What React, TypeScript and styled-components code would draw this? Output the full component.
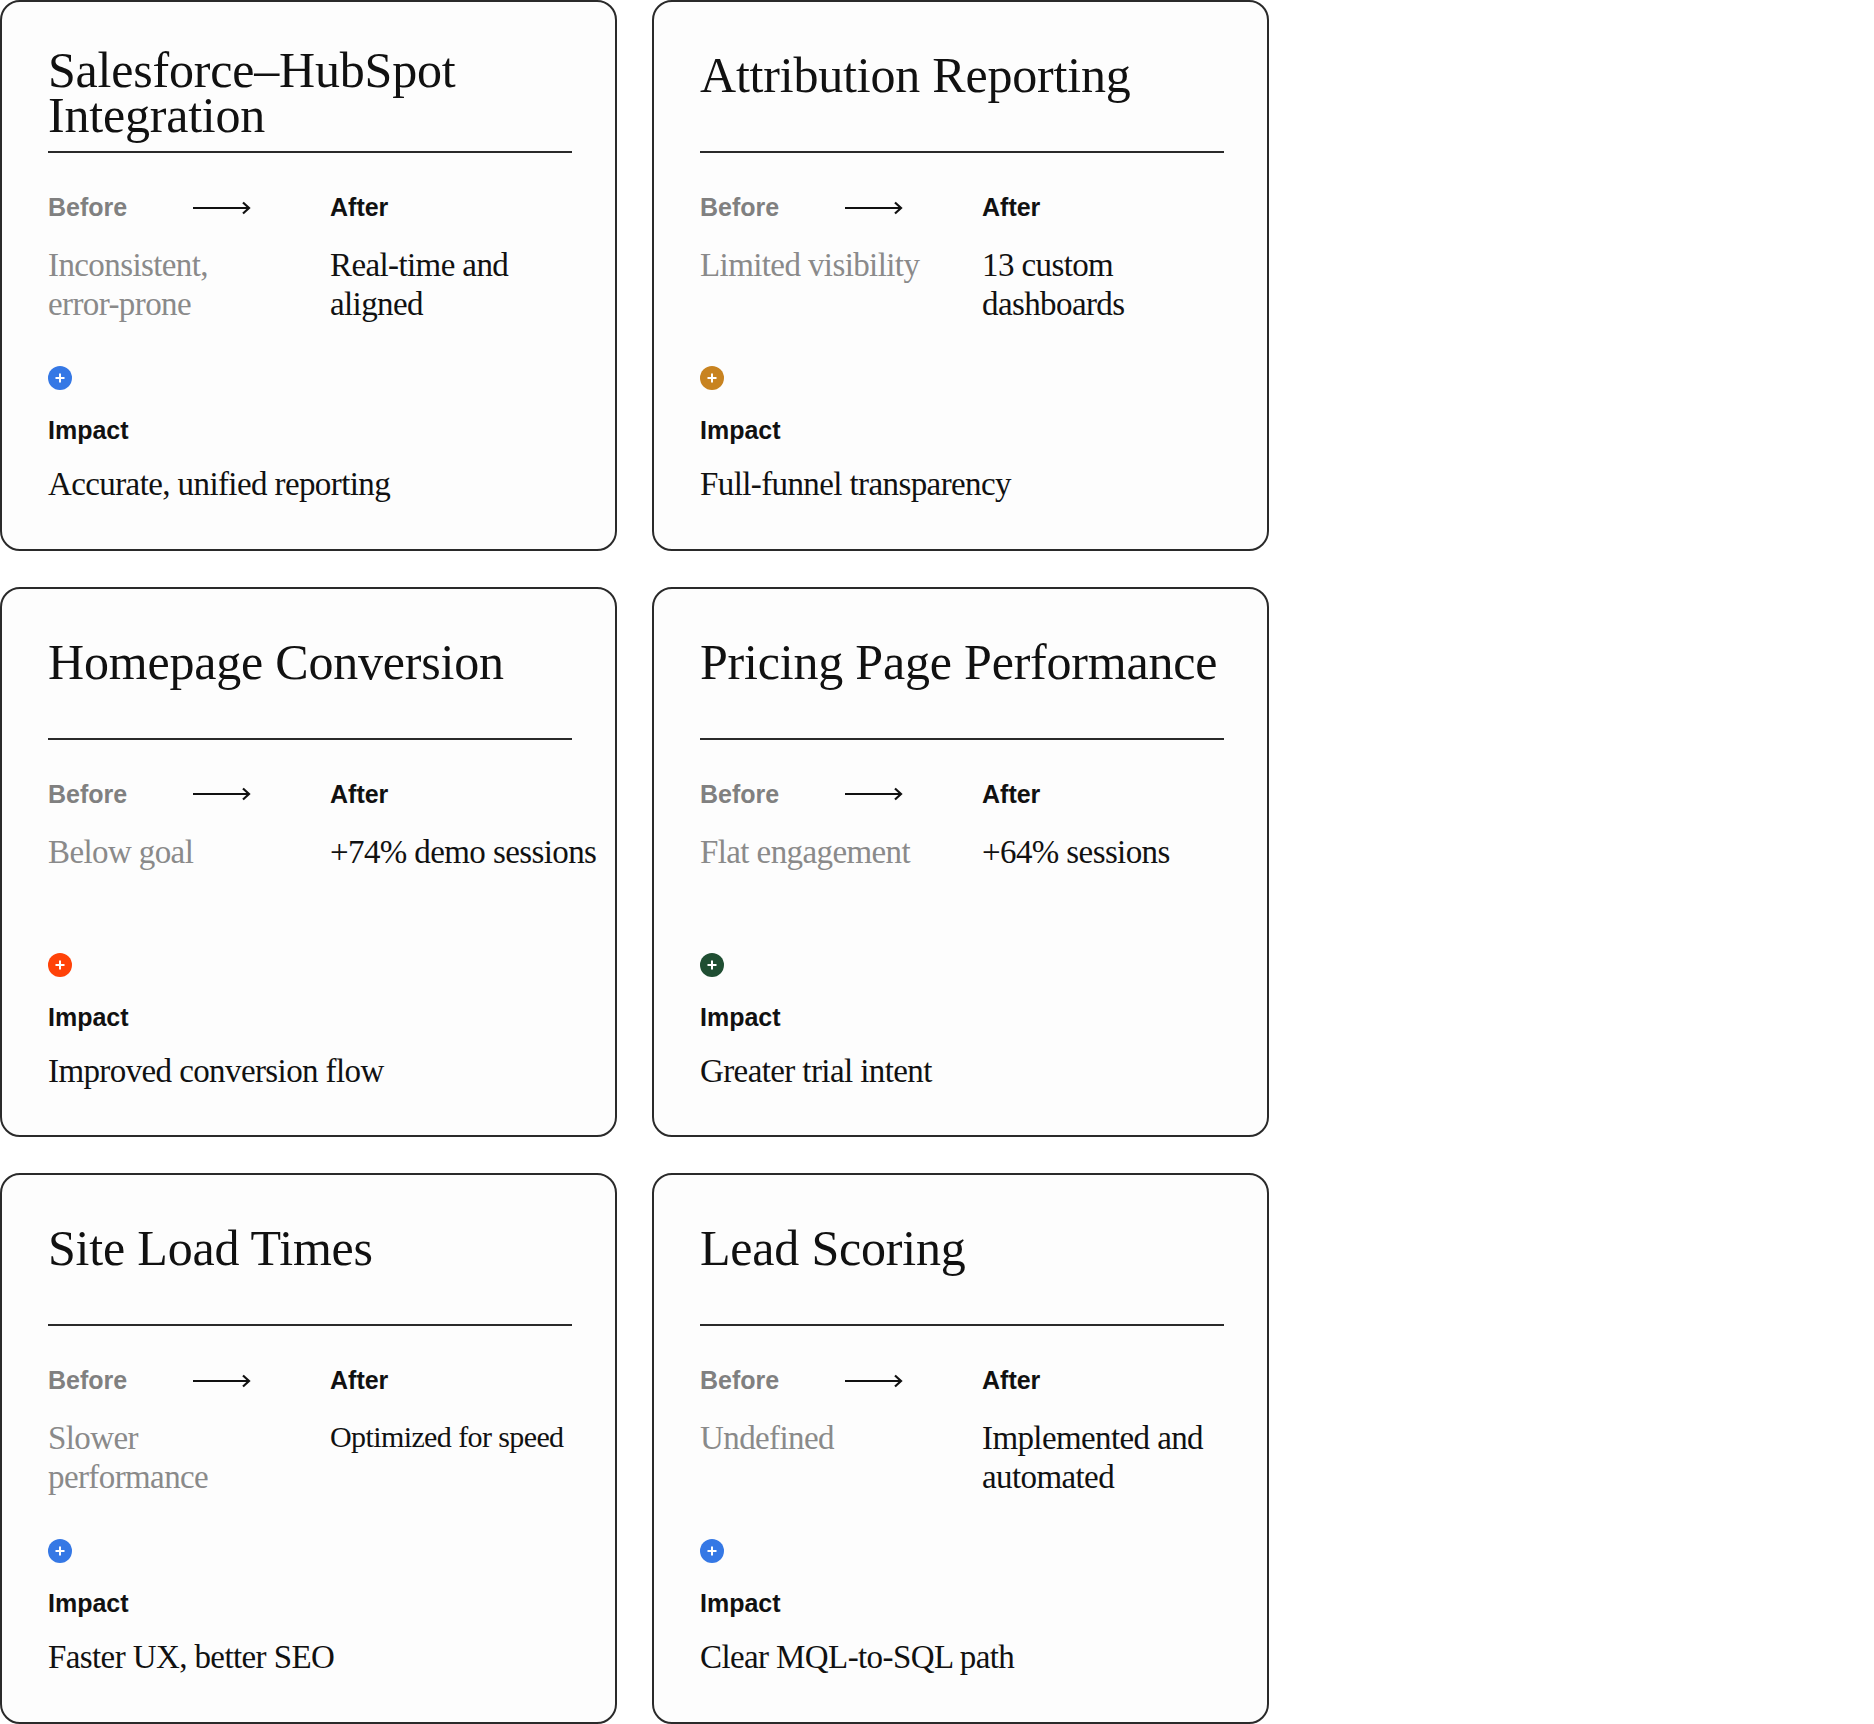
import styled, { createGlobalStyle } from 'styled-components';

interface CardData {
  title: string[];
  before: string[];
  after: string[];
  afterSmall?: boolean;
  impact: string;
  color: string;
}

const cards: CardData[] = [
  {
    title: ['Salesforce–HubSpot', 'Integration'],
    before: ['Inconsistent,', 'error-prone'],
    after: ['Real-time and', 'aligned'],
    impact: 'Accurate, unified reporting',
    color: '#3578e5',
  },
  {
    title: ['Attribution Reporting'],
    before: ['Limited visibility'],
    after: ['13 custom', 'dashboards'],
    impact: 'Full-funnel transparency',
    color: '#c88320',
  },
  {
    title: ['Homepage Conversion'],
    before: ['Below goal'],
    after: ['+74% demo sessions'],
    impact: 'Improved conversion flow',
    color: '#ff4208',
  },
  {
    title: ['Pricing Page Performance'],
    before: ['Flat engagement'],
    after: ['+64% sessions'],
    impact: 'Greater trial intent',
    color: '#1f4e32',
  },
  {
    title: ['Site Load Times'],
    before: ['Slower', 'performance'],
    after: ['Optimized for speed'],
    afterSmall: true,
    impact: 'Faster UX, better SEO',
    color: '#3578e5',
  },
  {
    title: ['Lead Scoring'],
    before: ['Undefined'],
    after: ['Implemented and', 'automated'],
    impact: 'Clear MQL-to-SQL path',
    color: '#3578e5',
  },
];

const Arrow = () => (
  <svg width="58" height="14" viewBox="0 0 58 14" fill="none" stroke="#111" strokeWidth="2.2">
    <path d="M0 7H56" />
    <path d="M50 1.5L56 7L50 12.5" />
  </svg>
);

const Plus = () => (
  <svg width="10" height="10" viewBox="0 0 10 10" stroke="#fff" strokeWidth="2">
    <path d="M5 0.5V9.5M0.5 5H9.5" />
  </svg>
);

const App = () => (
  <Grid>
    <GlobalStyle />
    {cards.map((card) => (
      <Card key={card.title[0]}>
        <TitleBlock>
          <Title $tight={card.title.length > 1}>
            {card.title.map((line) => (
              <span key={line}>{line}</span>
            ))}
          </Title>
        </TitleBlock>
        <Compare>
          <BeforeLabel>Before</BeforeLabel>
          <ArrowCell>
            <Arrow />
          </ArrowCell>
          <AfterLabel>After</AfterLabel>
          <Value $muted>
            {card.before.map((line) => (
              <span key={line}>{line}</span>
            ))}
          </Value>
          <Value $small={card.afterSmall}>
            {card.after.map((line) => (
              <span key={line}>{line}</span>
            ))}
          </Value>
        </Compare>
        <Dot $color={card.color}>
          <Plus />
        </Dot>
        <ImpactLabel>Impact</ImpactLabel>
        <ImpactValue>{card.impact}</ImpactValue>
      </Card>
    ))}
  </Grid>
);

const GlobalStyle = createGlobalStyle`
  html, body {
    margin: 0;
    background: #fff;
  }
`;

const Grid = styled.div`
  display: grid;
  grid-template-columns: 617px 617px;
  column-gap: 35px;
  row-gap: 36px;
  width: 1874px;
`;

const Card = styled.div`
  box-sizing: border-box;
  height: 550.5px;
  padding: 0 43px 0 46px;
  border: 2px solid #2a2a2a;
  border-radius: 20px;
  background: #fdfdfd;
  color: #111;
`;

const TitleBlock = styled.div`
  box-sizing: border-box;
  height: 151px;
  padding-top: 46px;
  border-bottom: 2px solid #2a2a2a;
`;

const Title = styled.h2<{ $tight?: boolean }>`
  margin: 0;
  font-family: 'Liberation Serif', serif;
  font-size: 50px;
  font-weight: 400;
  letter-spacing: -0.2px;
  line-height: ${(props) => (props.$tight ? '45px' : '55px')};
  white-space: nowrap;

  span {
    display: block;
  }
`;

const Compare = styled.div`
  box-sizing: border-box;
  display: grid;
  grid-template-columns: 145px 137px 1fr;
  grid-template-rows: 29px 1fr;
  row-gap: 24px;
  height: 213px;
  padding-top: 40px;
`;

const BeforeLabel = styled.div`
  font-family: 'Liberation Sans', sans-serif;
  font-size: 25px;
  font-weight: 700;
  line-height: 29px;
  color: #808080;
`;

const AfterLabel = styled(BeforeLabel)`
  color: #111;
`;

const ArrowCell = styled.div`
  display: flex;
  align-items: center;
`;

const Value = styled.div<{ $muted?: boolean; $small?: boolean }>`
  grid-column: ${(props) => (props.$muted ? '1 / span 2' : '3')};
  font-family: 'Liberation Serif', serif;
  font-size: ${(props) => (props.$small ? '30px' : '33px')};
  line-height: ${(props) => (props.$small ? '36px' : '39px')};
  letter-spacing: -0.6px;
  white-space: nowrap;
  color: ${(props) => (props.$muted ? '#8a8a8a' : '#111')};

  span {
    display: block;
  }
`;

const Dot = styled.div<{ $color: string }>`
  display: flex;
  align-items: center;
  justify-content: center;
  width: 24px;
  height: 24px;
  border-radius: 50%;
  margin-bottom: 26px;
  background: ${(props) => props.$color};
`;

const ImpactLabel = styled(BeforeLabel)`
  margin-bottom: 20px;
  color: #111;
`;

const ImpactValue = styled.div`
  font-family: 'Liberation Serif', serif;
  font-size: 33px;
  line-height: 39px;
  letter-spacing: -0.6px;
`;

export default App;
